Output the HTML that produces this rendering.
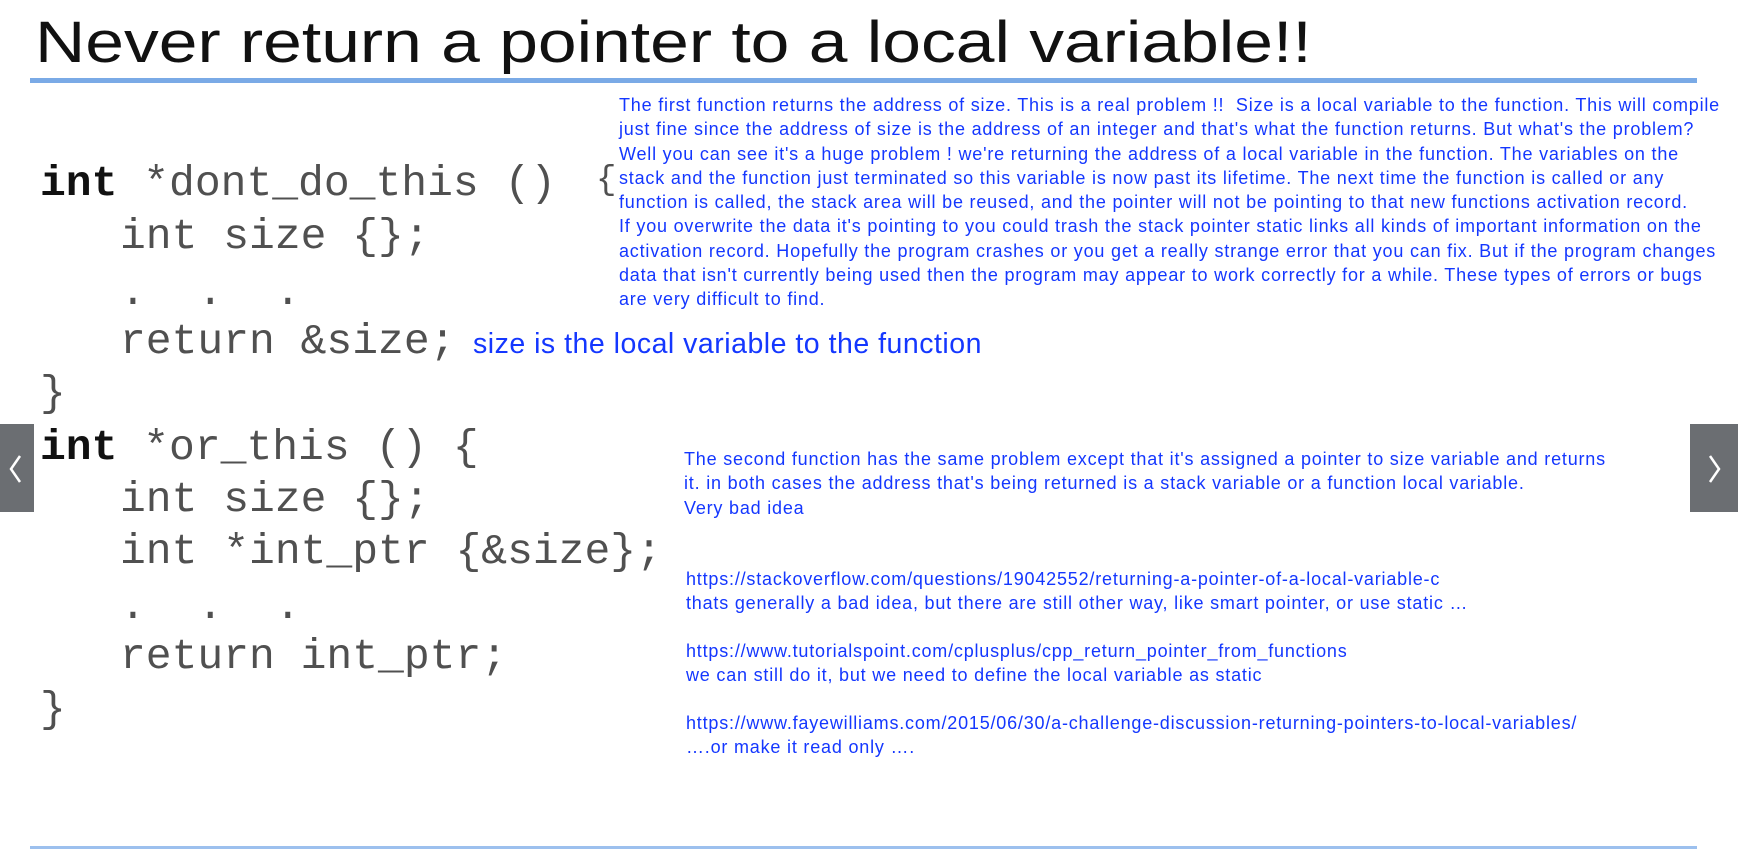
<!DOCTYPE html>
<html><head><meta charset="utf-8"><style>
body{margin:0;width:1738px;height:860px;background:#fff;position:relative;overflow:hidden;font-family:"Liberation Sans",sans-serif}
.t{position:absolute;left:35px;top:9px;font-size:58px;color:#111;white-space:nowrap;transform:scaleX(1.2);transform-origin:0 0}
.hl{position:absolute;left:30px;width:1667px;height:5px;background:#7aaae6}
.c{position:absolute;font-family:"Liberation Mono",monospace;font-size:43px;color:#505050;white-space:pre;line-height:1}
.c b{color:#111}
.b{position:absolute;color:#1437ff;white-space:nowrap;font-size:18px;letter-spacing:0.8px;line-height:24.3px}
.nav{position:absolute;background:#6b6e72;top:424px;height:88px}
</style></head><body>
<div class="t">Never return a pointer to a local variable!!</div>
<div class="hl" style="top:78px"></div>
<div class="hl" style="top:846px;height:3px;background:#9cc0ee"></div>

<div class="c" style="left:40px;top:162px"><b>int</b> *dont_do_this ()</div>
<div class="c" style="left:596px;top:164px;font-size:34px">{</div>
<div class="c" style="left:120px;top:215px">int size {};</div>
<div class="c" style="left:120px;top:271px">.  .  .</div>
<div class="c" style="left:120px;top:320px">return &amp;size;</div>
<div class="c" style="left:40px;top:372px">}</div>
<div class="c" style="left:40px;top:426px"><b>int</b> *or_this () {</div>
<div class="c" style="left:120px;top:478px">int size {};</div>
<div class="c" style="left:120px;top:530px">int *int_ptr {&amp;size};</div>
<div class="c" style="left:120px;top:585px">.  .  .</div>
<div class="c" style="left:120px;top:635px">return int_ptr;</div>
<div class="c" style="left:40px;top:688px">}</div>

<div class="b" style="left:473px;top:328px;font-size:28.5px;letter-spacing:0.5px;line-height:32px">size is the local variable to the function</div>

<div class="b" style="left:619px;top:93px">The first function returns the address of size. This is a real problem !!&nbsp; Size is a local variable to the function. This will compile<br>just fine since the address of size is the address of an integer and that's what the function returns. But what's the problem?<br>Well you can see it's a huge problem ! we're returning the address of a local variable in the function. The variables on the<br>stack and the function just terminated so this variable is now past its lifetime. The next time the function is called or any<br>function is called, the stack area will be reused, and the pointer will not be pointing to that new functions activation record.<br>If you overwrite the data it's pointing to you could trash the stack pointer static links all kinds of important information on the<br>activation record. Hopefully the program crashes or you get a really strange error that you can fix. But if the program changes<br>data that isn't currently being used then the program may appear to work correctly for a while. These types of errors or bugs<br>are very difficult to find.</div>

<div class="b" style="left:684px;top:447px">The second function has the same problem except that it's assigned a pointer to size variable and returns<br>it. in both cases the address that's being returned is a stack variable or a function local variable.<br>Very bad idea</div>

<div class="b" style="left:686px;top:567px">https://stackoverflow.com/questions/19042552/returning-a-pointer-of-a-local-variable-c<br>thats generally a bad idea, but there are still other way, like smart pointer, or use static …</div>
<div class="b" style="left:686px;top:639px">https://www.tutorialspoint.com/cplusplus/cpp_return_pointer_from_functions<br>we can still do it, but we need to define the local variable as static</div>
<div class="b" style="left:686px;top:711px">https://www.fayewilliams.com/2015/06/30/a-challenge-discussion-returning-pointers-to-local-variables/<br>….or make it read only ….</div>

<div class="nav" style="left:0;width:34px"><svg width="34" height="88"><path d="M20 32 L11 45 L20 58" stroke="#fff" stroke-width="2.5" fill="none"/></svg></div>
<div class="nav" style="left:1690px;width:48px"><svg width="48" height="88"><path d="M20 32 L29 45 L20 58" stroke="#fff" stroke-width="2.5" fill="none"/></svg></div>
</body></html>
